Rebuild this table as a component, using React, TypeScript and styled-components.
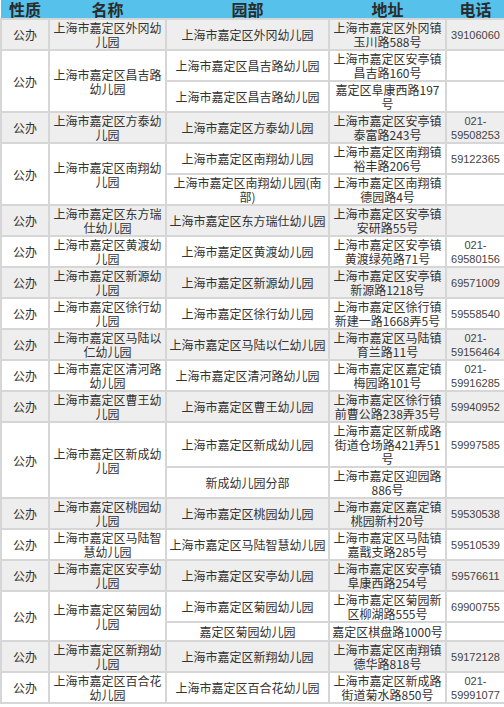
import * as React from "react";
import styled, { createGlobalStyle } from "styled-components";

const GlobalStyle = createGlobalStyle`
    html, body {
        margin: 0;
        padding: 0;
        background: #ffffff;
        overflow: hidden;
    }

    body {
        font-family: "Noto Sans CJK SC", "Liberation Sans", sans-serif;
        color: #333333;
    }
`

const Table = styled.table`
    width: 504px;
    table-layout: fixed;
    border-collapse: collapse;
    font-size: 12px;
    line-height: 14px;
`

const Col = styled.col<{ $w: number }>`
    width: ${p => p.$w}px;
`

const HeadCell = styled.th`
    background: #56c1ea;
    border: 0;
    height: 18px;
    color: #2b2b2b;
    font-size: 16px;
    line-height: 18px;
    font-weight: bold;
    padding: 0;
    text-align: center;
    vertical-align: middle;
`

const Cell = styled.td<{ $shade: boolean }>`
    background: ${p => (p.$shade ? "#eeeeee" : "#ffffff")};
    border: 2px solid #d6d6d6;
    padding: 1px 2px 0;
    height: 16px;
    text-align: center;
    vertical-align: middle;
    white-space: pre-line;
`

const PhoneCell = styled(Cell)`
    font-family: "Liberation Sans", "Noto Sans CJK SC", sans-serif;
    font-size: 11px;
    color: #444444;
`

interface ISite {
    campus: string;
    address: string;
    phone: string;
}

interface ISchool {
    kind: string;
    name: string;
    sites: ISite[];
}

const schools: ISchool[] = [
    { kind: "公办", name: "上海市嘉定区外冈幼\n儿园", sites: [
        { campus: "上海市嘉定区外冈幼儿园", address: "上海市嘉定区外冈镇\n玉川路588号", phone: "39106060" },
    ] },
    { kind: "公办", name: "上海市嘉定区昌吉路\n幼儿园", sites: [
        { campus: "上海市嘉定区昌吉路幼儿园", address: "上海市嘉定区安亭镇\n昌吉路160号", phone: "" },
        { campus: "上海市嘉定区昌吉路幼儿园", address: "嘉定区阜康西路197\n号", phone: "" },
    ] },
    { kind: "公办", name: "上海市嘉定区方泰幼\n儿园", sites: [
        { campus: "上海市嘉定区方泰幼儿园", address: "上海市嘉定区安亭镇\n泰富路243号", phone: "021-\n59508253" },
    ] },
    { kind: "公办", name: "上海市嘉定区南翔幼\n儿园", sites: [
        { campus: "上海市嘉定区南翔幼儿园", address: "上海市嘉定区南翔镇\n裕丰路206号", phone: "59122365" },
        { campus: "上海市嘉定区南翔幼儿园(南\n部)", address: "上海市嘉定区南翔镇\n德园路4号", phone: "" },
    ] },
    { kind: "公办", name: "上海市嘉定区东方瑞\n仕幼儿园", sites: [
        { campus: "上海市嘉定区东方瑞仕幼儿园", address: "上海市嘉定区安亭镇\n安研路55号", phone: "" },
    ] },
    { kind: "公办", name: "上海市嘉定区黄渡幼\n儿园", sites: [
        { campus: "上海市嘉定区黄渡幼儿园", address: "上海市嘉定区安亭镇\n黄渡绿苑路71号", phone: "021-\n69580156" },
    ] },
    { kind: "公办", name: "上海市嘉定区新源幼\n儿园", sites: [
        { campus: "上海市嘉定区新源幼儿园", address: "上海市嘉定区安亭镇\n新源路1218号", phone: "69571009" },
    ] },
    { kind: "公办", name: "上海市嘉定区徐行幼\n儿园", sites: [
        { campus: "上海市嘉定区徐行幼儿园", address: "上海市嘉定区徐行镇\n新建一路1668弄5号", phone: "59558540" },
    ] },
    { kind: "公办", name: "上海市嘉定区马陆以\n仁幼儿园", sites: [
        { campus: "上海市嘉定区马陆以仁幼儿园", address: "上海市嘉定区马陆镇\n育兰路11号", phone: "021-\n59156464" },
    ] },
    { kind: "公办", name: "上海市嘉定区清河路\n幼儿园", sites: [
        { campus: "上海市嘉定区清河路幼儿园", address: "上海市嘉定区嘉定镇\n梅园路101号", phone: "021-\n59916285" },
    ] },
    { kind: "公办", name: "上海市嘉定区曹王幼\n儿园", sites: [
        { campus: "上海市嘉定区曹王幼儿园", address: "上海市嘉定区徐行镇\n前曹公路238弄35号", phone: "59940952" },
    ] },
    { kind: "公办", name: "上海市嘉定区新成幼\n儿园", sites: [
        { campus: "上海市嘉定区新成幼儿园", address: "上海市嘉定区新成路\n街道仓场路421弄51\n号", phone: "59997585" },
        { campus: "新成幼儿园分部", address: "上海市嘉定区迎园路\n886号", phone: "" },
    ] },
    { kind: "公办", name: "上海市嘉定区桃园幼\n儿园", sites: [
        { campus: "上海市嘉定区桃园幼儿园", address: "上海市嘉定区嘉定镇\n桃园新村20号", phone: "59530538" },
    ] },
    { kind: "公办", name: "上海市嘉定区马陆智\n慧幼儿园", sites: [
        { campus: "上海市嘉定区马陆智慧幼儿园", address: "上海市嘉定区马陆镇\n嘉戬支路285号", phone: "59510539" },
    ] },
    { kind: "公办", name: "上海市嘉定区安亭幼\n儿园", sites: [
        { campus: "上海市嘉定区安亭幼儿园", address: "上海市嘉定区安亭镇\n阜康西路254号", phone: "59576611" },
    ] },
    { kind: "公办", name: "上海市嘉定区菊园幼\n儿园", sites: [
        { campus: "上海市嘉定区菊园幼儿园", address: "上海市嘉定区菊园新\n区柳湖路555号", phone: "69900755" },
        { campus: "嘉定区菊园幼儿园", address: "嘉定区棋盘路1000号", phone: "" },
    ] },
    { kind: "公办", name: "上海市嘉定区新翔幼\n儿园", sites: [
        { campus: "上海市嘉定区新翔幼儿园", address: "上海市嘉定区南翔镇\n德华路818号", phone: "59172128" },
    ] },
    { kind: "公办", name: "上海市嘉定区百合花\n幼儿园", sites: [
        { campus: "上海市嘉定区百合花幼儿园", address: "上海市嘉定区新成路\n街道菊水路850号", phone: "021-\n59991077" },
    ] },
]

function App() {
    return <>
        <GlobalStyle />
        <Table>
            <colgroup>
                <Col $w={48} />
                <Col $w={117} />
                <Col $w={163} />
                <Col $w={117} />
                <Col $w={59} />
            </colgroup>
            <thead>
                <tr>
                    <HeadCell>性质</HeadCell>
                    <HeadCell>名称</HeadCell>
                    <HeadCell>园部</HeadCell>
                    <HeadCell>地址</HeadCell>
                    <HeadCell>电话</HeadCell>
                </tr>
            </thead>
            <tbody>
                {schools.map((school, i) => {
                    const shade = i % 2 === 0;
                    return school.sites.map((site, j) => (
                        <tr key={`${i}-${j}`}>
                            {j === 0 && <Cell $shade={shade} rowSpan={school.sites.length}>{school.kind}</Cell>}
                            {j === 0 && <Cell $shade={shade} rowSpan={school.sites.length}>{school.name}</Cell>}
                            <Cell $shade={shade}>{site.campus}</Cell>
                            <Cell $shade={shade}>{site.address}</Cell>
                            <PhoneCell $shade={shade}>{site.phone}</PhoneCell>
                        </tr>
                    ));
                })}
            </tbody>
        </Table>
    </>
}

export default App;
